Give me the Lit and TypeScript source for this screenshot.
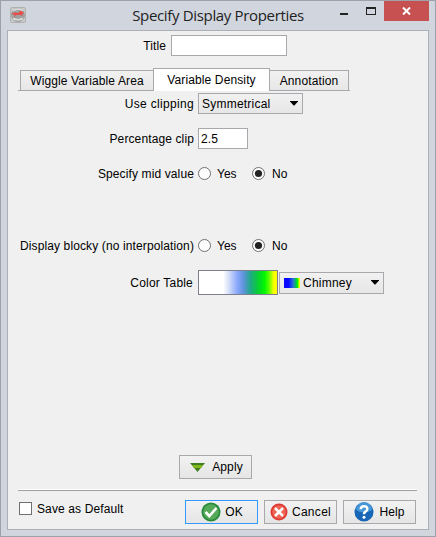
import { LitElement, html, css, svg } from "lit";
import { customElement, property } from "lit/decorators.js";

const shared = css`
  * { box-sizing: border-box; }
`;

@customElement("combo-box")
class ComboBox extends LitElement {
  @property() value = "";
  static styles = [shared, css`
    :host { display: flex; width: 105px; letter-spacing: 0.22px; }
    .box { flex: 1; display: flex; align-items: center; border: 1px solid #a9a9ad; padding: 0 3px; background: linear-gradient(#f1f1f1, #e6e6e6); }
    .value { flex: 1; white-space: nowrap; }
    .arrow { width: 8px; height: 5px; margin-right: 1px; }
  `];
  render() {
    return html`<div class="box"><slot></slot><span class="value">${this.value}</span>
      <svg class="arrow" viewBox="0 0 8 5"><path d="M0 0H8V.6L4.4 4.5H3.6L0 .6Z" fill="#000"/></svg></div>`;
  }
}

@customElement("radio-pair")
class RadioPair extends LitElement {
  static styles = [shared, css`
    :host { display: flex; align-items: center; letter-spacing: 0; }
    .option { display: flex; align-items: center; gap: 6px; width: 54px; }
    .option + .option { gap: 7px; }
    .dot { width: 13px; height: 13px; flex: none; }
  `];
  dot(on: boolean) {
    return html`<svg class="dot" viewBox="0 0 13 13"><circle cx="6.5" cy="6.5" r="6" fill="#fff" stroke="#6f6f6f"/>
      ${on ? svg`<circle cx="6.5" cy="6.5" r="3.6" fill="#222"/>` : ""}</svg>`;
  }
  render() {
    return html`<span class="option">${this.dot(false)}<span>Yes</span></span>
      <span class="option">${this.dot(true)}<span>No</span></span>`;
  }
}

@customElement("app-root")
class AppRoot extends LitElement {
  static styles = [shared, css`
    :host { display: block; width: 436px; height: 537px; font: 12px/14px "Liberation Sans", Arial, sans-serif; letter-spacing: 0.12px; color: #000; }
    .window { display: flex; flex-direction: column; width: 436px; height: 537px; background: #d0d5de; border: 1px solid #9ea1aa; padding: 0 6px 6px; }
    .titlebar { display: flex; height: 29px; flex: none; }
    .logo { width: 16px; height: 16px; margin: 6px 0 0 3px; }
    .caption { flex: 1; text-align: center; font: 15px/29px "Open Sans", "Noto Sans", sans-serif; color: #222; white-space: nowrap; letter-spacing: -0.34px; padding-left: 70px; }
    .min { width: 8px; height: 2px; background: #222; margin: 12px 18px 0 0; }
    .max { width: 10px; height: 8px; border: 1px solid #222; border-top-width: 2px; margin: 6px 8px 0 0; }
    .close { width: 45px; height: 20px; background: #c75050; display: flex; align-items: center; justify-content: center; }
    .close svg { width: 9px; height: 8px; }
    .client { flex: 1; display: flex; flex-direction: column; background: #f0f0f0; border: 1px solid #acafb8; padding: 4px 10px 5px; }
    .row { display: grid; grid-template-columns: 176px auto; column-gap: 4px; flex: none; height: 21px; align-items: center; justify-content: start; white-space: nowrap; }
    .row > .label { text-align: right; }
    .row > combo-box { height: 21px; }
    .title-row { grid-template-columns: 148px 116px; column-gap: 5px; }
    .field { height: 21px; background: #fff; border: 1px solid #a9a9ad; padding: 3px 2px 0; }
    .small { width: 50px; }
    .tabs { display: flex; align-items: flex-end; height: 23px; width: 332px; margin-top: 12px; padding-left: 2px; background: linear-gradient(#a9a9ad, #a9a9ad) bottom / 100% 1px no-repeat; flex: none; }
    .tab { height: 21px; border: 1px solid #a9a9ad; background: linear-gradient(#f1f1f1, #e7e7e7); text-align: center; padding-top: 3px; white-space: nowrap; }
    .wiggle { width: 133px; border-right: 0; }
    .density { width: 117px; height: 23px; background: #fff; border-bottom: 0; padding-top: 4px; }
    .annotation { width: 79px; border-left: 0; }
    .clip { margin-top: 2px; }
    .clip > .label { letter-spacing: 0.33px; }
    .percent { margin-top: 14px; }
    .mid { margin-top: 14px; }
    .blocky { margin-top: 51px; }
    .color { margin-top: 14px; height: 25px; }
    .color > .label { letter-spacing: 0.2px; padding-right: 1px; }
    .picker { display: flex; gap: 1px; align-items: center; }
    .picker combo-box { height: 22px; }
    .ramp { width: 80px; height: 25px; border: 1px solid #7c7f8c; background: linear-gradient(90deg, #fff 31%, #dce5f8 37%, #8ba8fb 49%, #5f94dc 57%, #20a888 66%, #08cc38 75%, #00f700 84%, #60ff00 90%, #ff0 96%); }
    .swatch { width: 16px; height: 10px; margin: 0 3px 0 1px; background: linear-gradient(90deg, #0808ff 28%, #1748e8 45%, #3275ce 58%, #08b76a 72%, #00f500 84%, #ff0 96%); }
    .button { width: 73px; height: 24px; border: 1px solid #a9a9ad; background: linear-gradient(#f2f2f2, #e5e5e5); display: flex; align-items: center; justify-content: center; white-space: nowrap; gap: 5px; }
    .apply { margin: 160px 0 0 161px; flex: none; gap: 7px; padding-left: 2px; }
    .apply svg { width: 15px; height: 9px; }
    .button .round { width: 20px; height: 20px; flex: none; }
    .primary { border-color: #3399ff; gap: 4px; letter-spacing: 0; padding-left: 1px; }
    .cancel { gap: 4px; letter-spacing: 0.3px; }
    .button.cancel .round { width: 18px; height: 18px; }
    .rule { height: 2px; width: 399px; margin-top: 10px; background: linear-gradient(#fff 50%, #a0a0a0 50%); flex: none; }
    .footer { display: flex; margin-top: 9px; }
    .save { flex: none; display: flex; gap: 5px; width: 167px; padding: 2px 0 0 1px; }
    .check { width: 13px; height: 13px; border: 1px solid #707070; background: #fff; }
    .actions { display: flex; gap: 6px; }
  `];
  render() {
    return html`
    <div class="window">
      <header class="titlebar">
        <svg class="logo" viewBox="0 0 16 16"><rect x=".5" y=".5" width="15" height="15" rx="1.5" fill="#c9cbcb" stroke="#b0b0b0"/><circle cx="8" cy="8" r="7" fill="#9da19f"/><path d="M3 4Q8 0 13 4M3 11.5Q8 14 13 11.5" stroke="#dedede" stroke-width="1.5" fill="none"/><path d="M1 7L4 5.5L8 6L11 3.5L14 6L12 7L13 9L9.5 7.8L6 8L4 10.5L4.5 7.5Z" fill="#e84a48"/></svg>
        <div class="caption">Specify Display Properties</div>
        <div class="min"></div><div class="max"></div>
        <div class="close"><svg viewBox="0 0 9 8"><path d="M1 .5L8 7.5M8 .5L1 7.5" stroke="#fff" stroke-width="2"/></svg></div>
      </header>
      <main class="client">
        <div class="row title-row"><span class="label">Title</span><div class="field"></div></div>
        <nav class="tabs"><div class="tab wiggle">Wiggle Variable Area</div><div class="tab density">Variable Density</div><div class="tab annotation">Annotation</div></nav>
        <div class="row clip"><span class="label">Use clipping</span><combo-box value="Symmetrical"></combo-box></div>
        <div class="row percent"><span class="label">Percentage clip</span><div class="field small">2.5</div></div>
        <div class="row mid"><span class="label">Specify mid value</span><radio-pair></radio-pair></div>
        <div class="row blocky"><span class="label">Display blocky (no interpolation)</span><radio-pair></radio-pair></div>
        <div class="row color"><span class="label">Color Table</span><div class="picker"><div class="ramp"></div><combo-box value="Chimney"><div class="swatch"></div></combo-box></div></div>
        <div class="button apply"><svg viewBox="0 0 15 9"><path d="M0 0H15L7.5 9Z" fill="#3f7d20"/><path d="M2 2H13L11 5H4Z" fill="#82b71c"/></svg><span>Apply</span></div>
        <div class="rule"></div>
        <footer class="footer">
          <div class="save"><div class="check"></div><span>Save as Default</span></div>
          <div class="actions">
            <div class="button primary"><svg class="round" viewBox="0 0 20 20"><circle cx="10" cy="10" r="9.5" fill="#268a3c"/><circle cx="10" cy="10" r="7.8" fill="#55a958"/><path d="M4.5 10L8.3 14L15.5 6" fill="none" stroke="#fff" stroke-width="2.6"/></svg><span>OK</span></div>
            <div class="button cancel"><svg class="round" viewBox="0 0 18 18"><circle cx="9" cy="9" r="8.5" fill="#dc3931"/><circle cx="9" cy="9" r="6.8" fill="#ef6354"/><path d="M5 5L13 13M13 5L5 13" stroke="#fff" stroke-width="2.5"/></svg><span>Cancel</span></div>
            <div class="button"><svg class="round" viewBox="0 0 20 20"><circle cx="10" cy="10" r="9.5" fill="#1865b5"/><path d="M2 8A8 8 0 0 1 18 8Q10 13 2 8Z" fill="#4697d8"/><path d="M6.7 7.3Q6.8 4.2 10 4.2Q13.4 4.2 13.3 7Q13.2 8.8 11.2 9.9Q10 10.7 10 12.2" fill="none" stroke="#fff" stroke-width="2.5"/><circle cx="10" cy="15.3" r="1.5" fill="#fff"/></svg><span>Help</span></div>
          </div>
        </footer>
      </main>
    </div>`;
  }
}
